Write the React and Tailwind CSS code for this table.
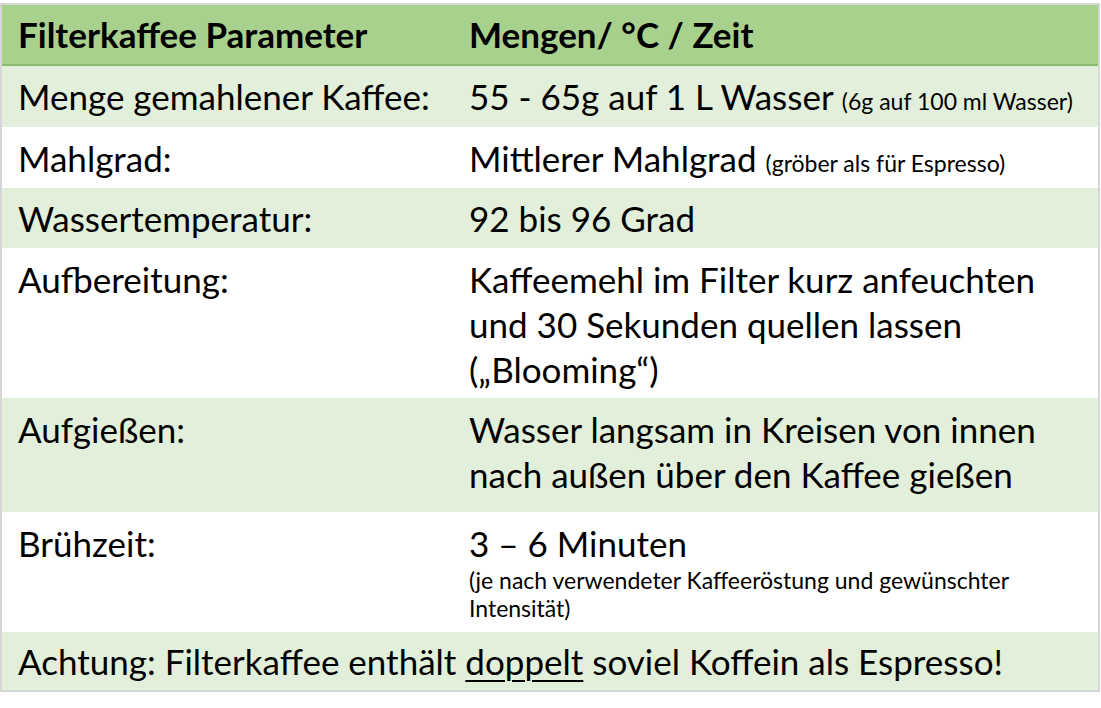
import React from "react";

const Row = ({ label, children, className = "" }) => (
  <div className={`grid grid-cols-[451px_1fr] pl-[16px] ${className}`}>
    <div>{label}</div>
    <div>{children}</div>
  </div>
);

const Small = ({ children }) => (
  <span className="text-[23px] leading-none">{children}</span>
);

export default function App() {
  return (
    <div className="w-[1101px] h-[708px] bg-white pt-[3px] font-['Lato',sans-serif] text-black">
      <div className="border-2 border-[#d6d6d6] mr-[1px]">
        {/* header */}
        <div className="grid grid-cols-[451px_1fr] pl-[16px] h-[61px] items-center bg-[#a9d18e] border-b-2 border-[#8cbd6e] text-[35px] font-bold">
          <div>Filterkaffee Parameter</div>
          <div>Mengen/ °C / Zeit</div>
        </div>

        <div className="text-[35px] leading-[45px]">
          <Row label="Menge gemahlener Kaffee:" className="bg-[#e2efda] h-[61px] pt-[8px]">
            55 - 65g auf 1 L Wasser <Small>(6g auf 100 ml Wasser)</Small>
          </Row>
          <Row label="Mahlgrad:" className="bg-white h-[61px] pt-[9px]">
            Mittlerer Mahlgrad <Small>(gröber als für Espresso)</Small>
          </Row>
          <Row label="Wassertemperatur:" className="bg-[#e2efda] h-[60px] pt-[8px]">
            92 bis 96 Grad
          </Row>
          <Row label="Aufbereitung:" className="bg-white h-[150px] pt-[9px]">
            Kaffeemehl im Filter kurz anfeuchten
            <br />
            und 30 Sekunden quellen lassen
            <br />
            („Blooming“)
          </Row>
          <Row label="Aufgießen:" className="bg-[#e2efda] h-[114px] pt-[9px]">
            Wasser langsam in Kreisen von innen
            <br />
            nach außen über den Kaffee gießen
          </Row>
          <Row label="Brühzeit:" className="bg-white h-[120px] pt-[9px]">
            <div>3 – 6 Minuten</div>
            <div className="text-[23px] leading-[28px]">
              (je nach verwendeter Kaffeeröstung und gewünschter
              <br />
              Intensität)
            </div>
          </Row>
          <div className="bg-[#e2efda] h-[58px] pt-[7px] pl-[16px]">
            Achtung: Filterkaffee enthält{" "}
            <span className="underline underline-offset-[5px] decoration-[2px]">doppelt</span>{" "}
            soviel Koffein als Espresso!
          </div>
        </div>
      </div>
    </div>
  );
}
